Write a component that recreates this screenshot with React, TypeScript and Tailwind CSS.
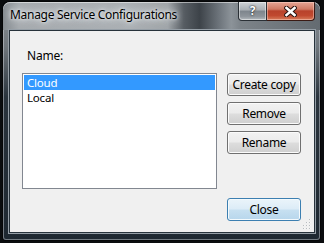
import React from "react";

const font = { fontFamily: '"Noto Sans", "Segoe UI", sans-serif' };

function WinButton({ label, primary }: { label: string; primary?: boolean }) {
  return (
    <div
      className={
        "w-[74px] h-[23px] rounded-[3px] border flex items-center justify-center text-[12px] leading-[15px] tracking-[-0.3px] text-black " +
        (primary
          ? "border-[#3c7fb1] bg-[linear-gradient(180deg,#eaf4fa_0%,#dcecf7_48%,#c7e0f1_52%,#b7d6ec_100%)] shadow-[inset_0_0_0_1px_#f4fafd]"
          : "border-[#707070] bg-[linear-gradient(180deg,#f2f2f2_0%,#ebebeb_48%,#dddddd_52%,#cfcfcf_100%)] shadow-[inset_0_0_0_1px_#fbfbfb]")
      }
    >
      {label}
    </div>
  );
}

export default function App() {
  return (
    <div className="w-[324px] h-[243px] bg-[#0a0c0e] pl-[3px] pt-[2px] overflow-hidden" style={font}>
      <div className="w-[317px] h-[238px] rounded-t-[7px] rounded-b-[3px] flex flex-col bg-[linear-gradient(180deg,#8d9398_0px,#6f767c_45px,#2a343d_95px,#1e2831_100%)] shadow-[inset_0_0_0_1px_rgba(220,225,230,0.45),0_0_0_1px_#050607] overflow-hidden">
        {/* Title bar */}
        <div className="h-[28px] flex items-start justify-between rounded-t-[7px] bg-[linear-gradient(90deg,#858b90_0%,#a6abaf_5%,#abb0b4_40%,#a0a5a9_52%,#575d63_57%,#3d4349_62%,#6c737a_68%,#8c9399_72%,#7c8389_75%,#646b71_100%)] shadow-[inset_0_1px_0_rgba(255,255,255,0.5)]">
          <div className="pl-[7px] pt-[5px] text-[12px] leading-[16px] tracking-[-0.3px] text-black [text-shadow:0_0_6px_#e8ecef,0_0_10px_#dfe3e6,0_0_3px_#eef1f3]">
            Manage Service Configurations
          </div>
          <div className="flex mr-[5px]">
            <div className="w-[29px] h-[19px] rounded-bl-[4px] border border-t-0 border-[#2a3036] bg-[linear-gradient(180deg,#cfd3d6_0%,#a9afb4_45%,#7d858c_50%,#8e959b_80%,#b5bbc0_100%)] shadow-[inset_0_0_0_1px_rgba(255,255,255,0.45)] flex items-center justify-center">
              <span className="text-white font-bold text-[12px] leading-[12px] [text-shadow:0_0_1px_#1d2226,0_0_2px_#1d2226]">?</span>
            </div>
            <div className="w-[48px] h-[19px] rounded-br-[4px] border border-t-0 border-l-0 border-[#3a1a14] bg-[linear-gradient(180deg,#e6a594_0%,#d07a64_40%,#b8422b_50%,#c0492f_75%,#d77d5b_100%)] shadow-[inset_0_0_0_1px_rgba(255,220,210,0.45)] flex items-center justify-center">
              <svg width="13" height="11" viewBox="0 0 13 11">
                <path d="M2.5 2 L10.5 9 M10.5 2 L2.5 9" stroke="#2a1410" strokeWidth="4.6" strokeLinecap="square" />
                <path d="M2.5 2 L10.5 9 M10.5 2 L2.5 9" stroke="#ffffff" strokeWidth="2.6" strokeLinecap="square" />
              </svg>
            </div>
          </div>
        </div>
        {/* Client */}
        <div className="relative ml-[6px] w-[306px] h-[203px] border border-[#27323b] bg-[#f0f0f0] shadow-[0_0_0_1px_#959ea6] pl-[12px] text-[12px] leading-[15px] tracking-[-0.2px] text-black">
          <div className="pt-[17px] pl-[5px] h-[32px]">Name:</div>
          <div className="mt-[10px] grid grid-cols-[195px_74px] gap-x-[10px]">
            <div className="h-[116px] border border-[#828790] bg-white p-[1px]">
              <div className="h-[15px] flex items-center bg-[#3399ff] text-white pl-[3px] text-[11.5px] leading-[13px]">Cloud</div>
              <div className="h-[15px] flex items-center pl-[3px] text-[11.5px] leading-[13px]">Local</div>
            </div>
            <div className="flex flex-col gap-[6px]">
              <WinButton label="Create copy" />
              <WinButton label="Remove" />
              <WinButton label="Rename" />
            </div>
            <div />
            <div className="mt-[9px]">
              <WinButton label="Close" primary />
            </div>
          </div>
          <svg className="absolute right-[3px] bottom-[3px]" width="10" height="10" viewBox="0 0 10 10">
            {[
              [8, 0], [8, 3], [5, 3], [8, 6], [5, 6], [2, 6], [8, 9], [5, 9], [2, 9],
            ].map(([x, y], i) => (
              <g key={i}>
                <rect x={x + 0.5} y={y - 0.5 + 0.5} width="1" height="1" fill="#ffffff" />
                <rect x={x} y={y} width="1" height="1" fill="#b8bcc0" />
              </g>
            ))}
          </svg>
        </div>
      </div>
    </div>
  );
}
